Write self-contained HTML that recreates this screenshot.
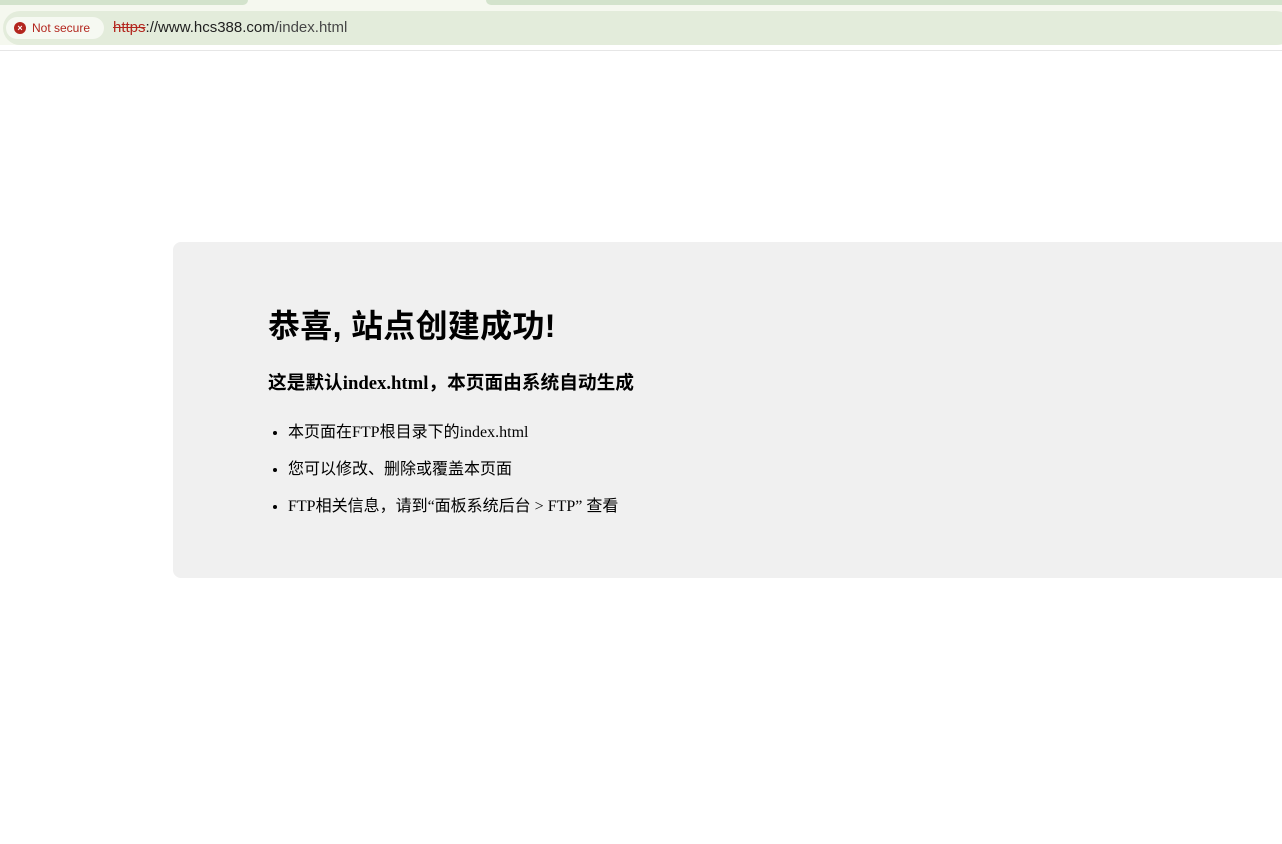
<!DOCTYPE html>
<html><head><meta charset="utf-8"><style>
body{margin:0;width:1282px;height:844px;overflow:hidden;background:#fff;font-family:"Liberation Serif","Noto Sans CJK SC",serif;position:relative}
.tabs{position:absolute;left:0;top:0;width:1282px;height:11px;background:#f5f8ef}
.t1{position:absolute;left:0;top:0;width:248px;height:5px;background:#d3e3cc;border-radius:0 0 8px 0}
.t2{position:absolute;left:486px;top:0;width:796px;height:5px;background:#d3e3cc;border-radius:0 0 0 8px}
.bar{position:absolute;left:0;top:11px;width:1282px;height:34px;background:#f5f8ef}
.omni{position:absolute;left:3px;top:0;width:1290px;height:34px;background:#e3ecdb;border-radius:17px}
.ns{position:absolute;left:3px;top:6px;width:98px;height:22px;background:#f6f9f2;border-radius:11px;font:12px "Liberation Sans",sans-serif;color:#b3261e;line-height:22px}
.ns i{position:absolute;left:8px;top:5px;width:12px;height:12px;border-radius:50%;background:#b3261e;color:#fff;font:bold 9px "Liberation Sans";line-height:12px;text-align:center;font-style:normal}
.ns span{position:absolute;left:26px;line-height:22px}
.url{position:absolute;left:110px;top:0;font:15px "Liberation Sans",sans-serif;line-height:34px;color:#1f1f1f}
.url s{color:#b3261e}
.line{position:absolute;left:0;top:50px;width:1282px;height:1px;background:#e6e6e6}
.box{position:absolute;left:173px;top:242px;width:1130px;height:336px;background:#f0f0f0;border-radius:8px}
h1{position:absolute;left:95px;top:64px;margin:0;font:bold 32px "Liberation Sans","Noto Sans CJK SC",sans-serif;line-height:40px;letter-spacing:0.3px}
h3{position:absolute;left:95px;top:130px;margin:0;font:bold 18.7px "Liberation Serif","Noto Sans CJK SC",serif;line-height:24px;white-space:nowrap}
ul{position:absolute;left:75px;top:181px;margin:0;padding-left:40px;font-size:16px;line-height:20px;white-space:nowrap}
li{margin-bottom:17px}
</style></head><body>
<div class="tabs"><div class="t1"></div><div class="t2"></div></div>
<div class="bar"><div class="omni"><div class="ns"><i>×</i><span>Not secure</span></div>
<div class="url"><s>https</s>://www.hcs388.com<span style="color:#474747">/index.html</span></div></div></div>
<div class="line"></div>
<div class="box">
<h1>恭喜, 站点创建成功!</h1>
<h3>这是默认index.html，本页面由系统自动生成</h3>
<ul><li>本页面在FTP根目录下的index.html</li><li>您可以修改、删除或覆盖本页面</li><li>FTP相关信息，请到“面板系统后台 &gt; FTP” 查看</li></ul>
</div>
</body></html>
